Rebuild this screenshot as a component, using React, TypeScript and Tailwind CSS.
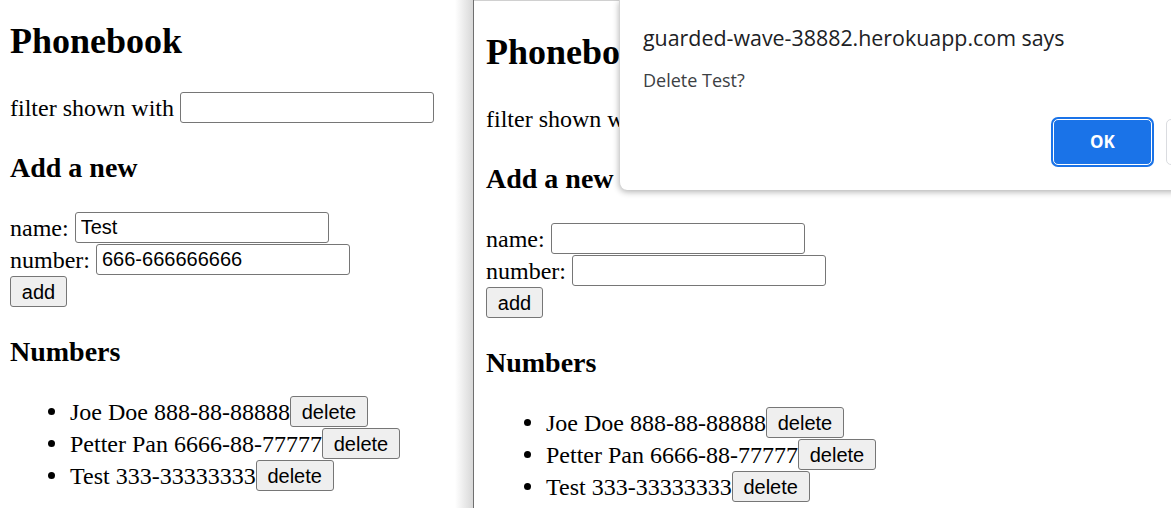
import React from 'react';

type PageProps = {
  name?: string;
  number?: string;
};

const people = [
  { name: 'Joe Doe', number: '888-88-88888' },
  { name: 'Petter Pan', number: '6666-88-77777' },
  { name: 'Test', number: '333-33333333' },
];

const Field: React.FC<{ value?: string }> = ({ value = '' }) => (
  <input
    readOnly
    value={value}
    className="h-[31px] w-[254px] rounded-[3px] border border-[#767676] bg-white px-[5px] font-['Liberation_Sans',Arial,sans-serif] text-[20px] text-black outline-none"
  />
);

const GrayButton: React.FC<{ label: string; width: string }> = ({ label, width }) => (
  <button
    className={`${width} h-[31px] rounded-[3px] border border-[#767676] bg-[#efefef] font-['Liberation_Sans',Arial,sans-serif] text-[20px] leading-none text-black`}
  >
    {label}
  </button>
);

const PhonebookPage: React.FC<PageProps> = ({ name, number }) => (
  <div className="pl-[10px] text-[24px] leading-[28px] text-black">
    <h2 className="pt-[20px] text-[36px] font-bold leading-[42px]">Phonebook</h2>

    {/* Filter */}
    <div className="mt-[30px] flex h-[31px] items-center gap-[6px] whitespace-nowrap">
      <span>filter shown with</span>
      <Field />
    </div>

    <h3 className="mt-[29px] text-[28px] font-bold leading-[32px]">Add a new</h3>

    {/* Form */}
    <div className="mt-[28px] flex flex-col gap-[1px]">
      <div className="flex h-[31px] items-center gap-[6px]">
        <span>name:</span>
        <Field value={name} />
      </div>
      <div className="flex h-[31px] items-center gap-[6px]">
        <span>number:</span>
        <Field value={number} />
      </div>
      <div>
        <GrayButton label="add" width="w-[57px]" />
      </div>
    </div>

    <h3 className="mt-[29px] text-[28px] font-bold leading-[32px]">Numbers</h3>

    {/* List */}
    <ul className="mt-[28px] flex flex-col gap-[1px]">
      {people.map((p) => (
        <li key={p.name} className="flex h-[31px] items-center whitespace-nowrap pl-[38px]">
          <span className="mr-[15px] h-[7px] w-[7px] shrink-0 rounded-full bg-black" />
          <span>
            {p.name} {p.number}
          </span>
          <GrayButton label="delete" width="w-[78px]" />
        </li>
      ))}
    </ul>
  </div>
);

const ConfirmDialog: React.FC = () => (
  <div className="absolute left-[619px] top-0 h-[190px] w-[620px] rounded-bl-[8px] border-l border-[#d4d4d4] bg-white pl-[23px] pt-[24px] font-['Open_Sans',sans-serif] shadow-[0_2px_6px_rgba(0,0,0,0.3)]">
    <div className="whitespace-nowrap text-[21.4px] leading-[28px] text-[#202124]">guarded-wave-38882.herokuapp.com says</div>
    <div className="mt-[16px] text-[18px] leading-[24px] text-[#3c4043]">Delete Test?</div>
    <div className="mt-[27px] flex gap-[14px] pl-[410px]">
      <button className="h-[46px] w-[99px] shrink-0 rounded-[5px] border-[1.5px] border-white bg-[#1a73e8] text-[17px] font-bold text-white ring-2 ring-[#1a73e8]">
        OK
      </button>
      {/* Cancel button, cut off by the window edge */}
      <button
        aria-label="Cancel"
        className="h-[46px] w-[110px] shrink-0 rounded-[5px] border border-[#dadce0] bg-white"
      />
    </div>
  </div>
);

export default function App() {
  return (
    <div className="relative flex h-[508px] w-[1171px] overflow-hidden bg-white font-['Liberation_Serif',serif]">
      {/* Left window */}
      <div className="w-[455px] shrink-0">
        <PhonebookPage name="Test" number="666-666666666" />
      </div>
      {/* Shadow of the right window */}
      <div className="w-[18px] shrink-0 bg-linear-to-r from-white to-[#d8d8d8]" />
      <div className="w-px shrink-0 bg-[#6f6f6f]" />

      {/* Right window */}
      <div className="flex-1 border-t border-[#d0d0d0] pl-[2px] pt-[10px]">
        <PhonebookPage />
      </div>

      <ConfirmDialog />
    </div>
  );
}
